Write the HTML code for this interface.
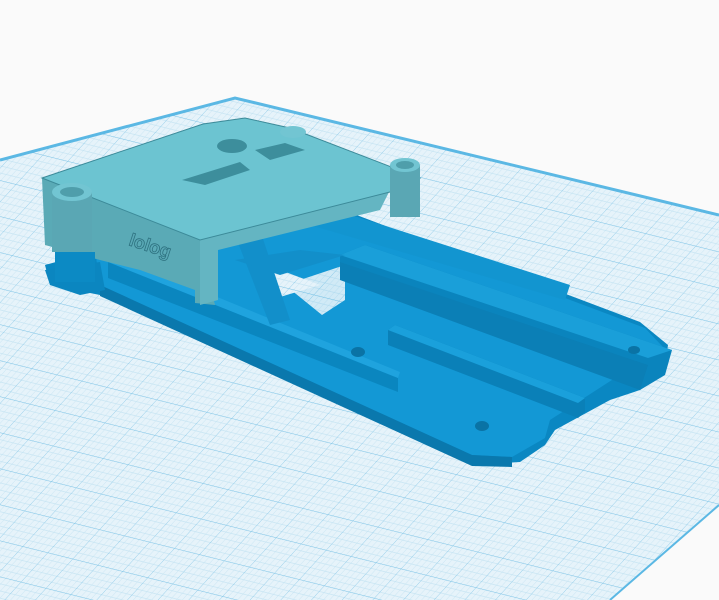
<!DOCTYPE html><html><head><meta charset="utf-8"><style>html,body{margin:0;padding:0;background:#fafafa;width:719px;height:600px;overflow:hidden}</style></head><body>
<svg width="719" height="600" viewBox="0 0 719 600" xmlns="http://www.w3.org/2000/svg">
<defs>
<pattern id="g" width="30" height="30" patternUnits="userSpaceOnUse" patternTransform="skewX(-35) rotate(12)">
<rect width="30" height="30" fill="#e6f3fa"/>
<path d="M0 6H30M0 12H30M0 18H30M0 24H30M6 0V30M12 0V30M18 0V30M24 0V30" stroke="#c4e3f2" stroke-width="0.5"/>
<path d="M0 0H30M0 0V30" stroke="#7fc4e6" stroke-width="0.9"/>
</pattern>
</defs>
<rect width="719" height="600" fill="#fafafa"/>
<polygon points="0,160 235,98 719,215 719,505 610,600 0,600" fill="url(#g)"/>
<polyline points="0,160 235,98 719,215" fill="none" stroke="#5bb8e4" stroke-width="3"/>
<polyline points="719,505 610,600" fill="none" stroke="#5bb8e4" stroke-width="2"/>
<!-- base plate -->
<polygon points="45,265 100,250 330,205 640,322 668,345 665,365 640,390 610,400 555,430 545,445 520,462 475,465 100,295 50,285" fill="#0a87c2"/>
<polygon points="95,250 330,210 645,328 663,347 550,420 545,438 512,457 472,455 100,285" fill="#1398d5"/>
<polygon points="100,285 472,455 512,457 512,467 472,466 100,296" fill="#0a78ad"/>
<!-- openings -->
<polygon points="270,300 320,285 275,268" fill="url(#g)"/>
<polygon points="285,285 345,265 345,300 322,315" fill="url(#g)" opacity="0.9"/>
<!-- left foot -->
<polygon points="45,270 100,262 105,290 80,295 50,285" fill="#0b86c0"/>
<!-- front rail -->
<polygon points="108,262 398,378 398,392 108,278" fill="#0a86bf"/>
<polygon points="108,257 115,255 400,372 398,378 108,262" fill="#1fa3de"/>
<!-- middle rail -->
<polygon points="388,330 395,325 585,398 585,412 578,418 388,345" fill="#0a80b8"/>
<polygon points="388,330 395,325 585,398 578,403" fill="#1aa0db"/>
<!-- big right rail -->
<polygon points="340,255 365,245 672,350 665,375 640,390 340,275" fill="#0a84bd"/>
<polygon points="340,255 365,245 672,350 648,358" fill="#1a9fd9"/>
<polygon points="340,262 648,365 640,390 340,280" fill="#0b7fb6"/>
<!-- back rail -->
<polygon points="300,210 320,205 570,285 565,300 300,222" fill="#1295d0"/>
<!-- braces / cross -->
<polygon points="235,235 260,230 290,320 270,325" fill="#128fca"/>
<polygon points="235,260 300,250 345,255 280,275" fill="#128fca"/>
<!-- holes -->
<ellipse cx="358" cy="352" rx="7" ry="5" fill="#0a73a5"/>
<ellipse cx="482" cy="426" rx="7" ry="5" fill="#0a73a5"/>
<ellipse cx="634" cy="350" rx="6" ry="4" fill="#0a73a5"/>
<!-- cover -->
<polygon points="42,178 100,195 200,240 215,305 195,303 195,290 140,270 100,260 45,245" fill="#5aaab6"/>
<polygon points="200,240 390,190 380,210 218,250 218,300 200,305" fill="#64b5c2"/>
<polygon points="42,178 203,124 245,118 290,128 420,178 390,192 200,240" fill="#6cc4d1" stroke="#3c8a99" stroke-width="1"/>
<polygon points="182,180 240,162 250,170 205,185" fill="#3d8e9c"/>
<ellipse cx="232" cy="146" rx="15" ry="7" fill="#3d8e9c"/>
<polygon points="255,150 285,143 305,150 270,160" fill="#3d8e9c"/>
<polygon points="72,215 88,212 88,250 72,248" fill="#4a97a5"/>
<text x="128" y="245" font-family="Liberation Sans, sans-serif" font-weight="bold" font-size="18" fill="#5aa9b6" stroke="#2e7280" stroke-width="0.8" transform="rotate(18 128 245)">lolog</text>
<!-- cylinders -->
<rect x="52" y="192" width="40" height="60" fill="#5aa7b4"/>
<ellipse cx="72" cy="192" rx="20" ry="9" fill="#72c5d2"/>
<ellipse cx="72" cy="192" rx="12" ry="5" fill="#4f9eab"/>
<rect x="55" y="252" width="40" height="30" fill="#0c8ac4"/>
<rect x="390" y="165" width="30" height="52" fill="#5aa7b4"/>
<ellipse cx="405" cy="165" rx="15" ry="7" fill="#72c5d2"/>
<ellipse cx="405" cy="165" rx="9" ry="4" fill="#4f9eab"/>
<ellipse cx="293" cy="132" rx="13" ry="6" fill="#72c5d2"/>
</svg>
</body></html>
